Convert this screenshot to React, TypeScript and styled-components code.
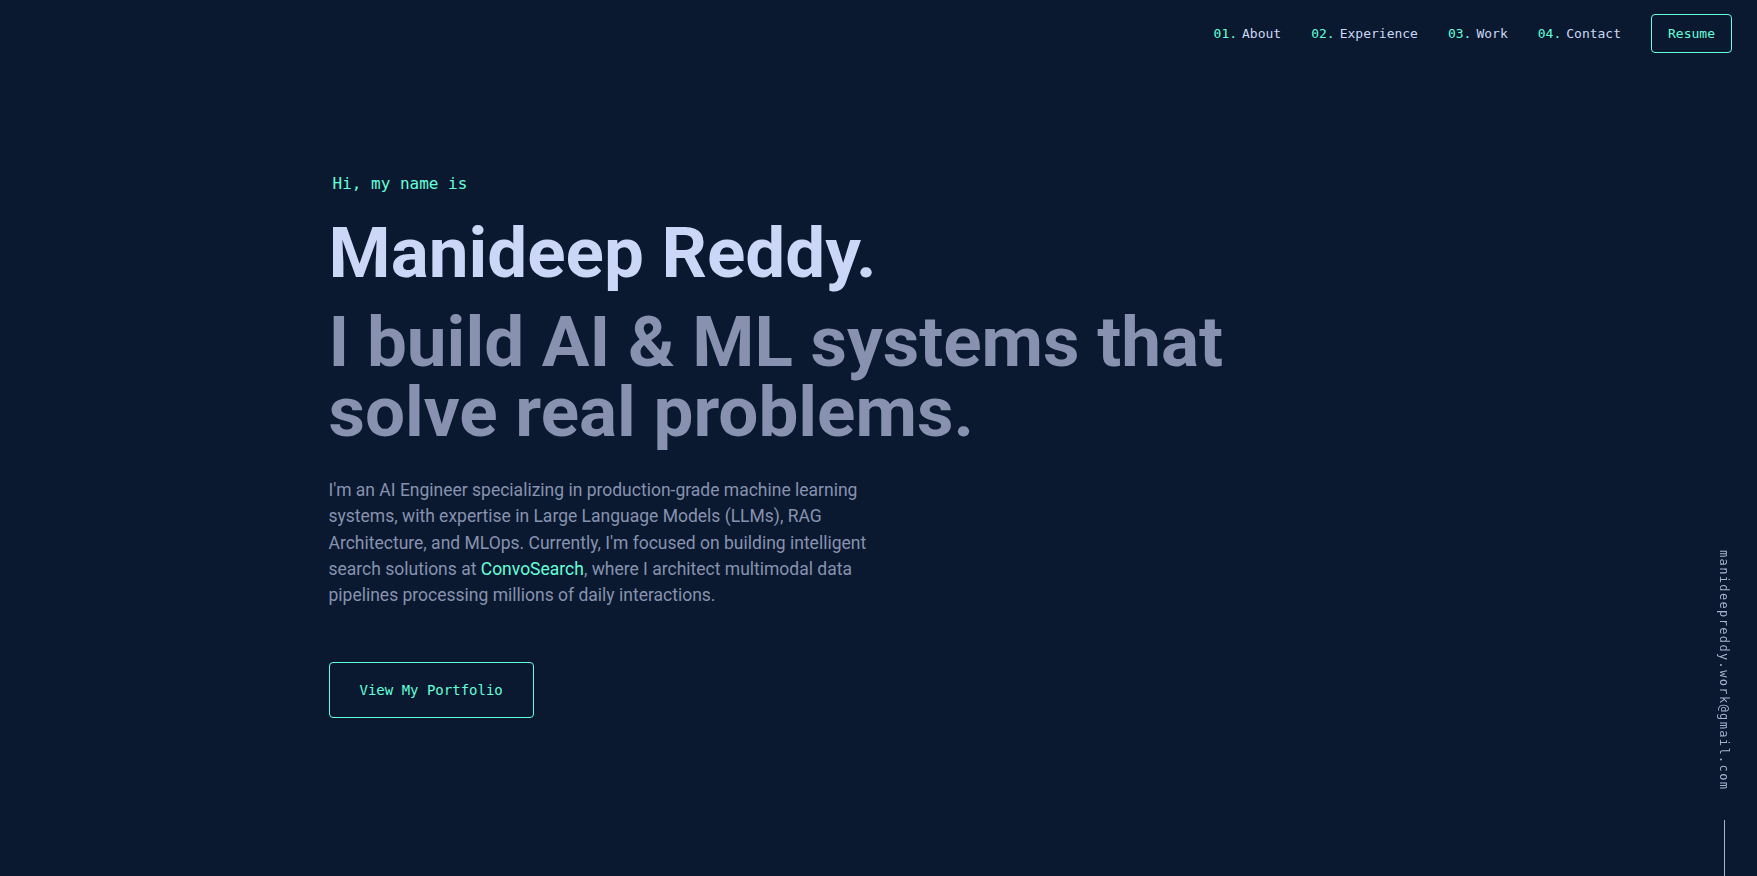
import React from 'react';
import styled, { createGlobalStyle } from 'styled-components';

const GlobalStyle = createGlobalStyle`
	* { box-sizing: border-box; }
	html, body {
		margin: 0;
		padding: 0;
		background: #0a192f;
		color: #8892b0;
		font-family: Roboto, "Liberation Sans", sans-serif;
		overflow: hidden;
	}
`;

const MONO = `"DejaVu Sans Mono", "Liberation Mono", monospace`;

const links = ['About', 'Experience', 'Work', 'Contact'];

const App: React.FC = () => {
	return (
		<Page>
			<GlobalStyle />
			<Header>
				<NavList>
					{links.map((label, i) => (
						<NavItem key={label}>
							<NavLink href={`#${label.toLowerCase()}`}>
								<Num>0{i + 1}.</Num>
								{label}
							</NavLink>
						</NavItem>
					))}
				</NavList>
				<ResumeButton href="#resume">Resume</ResumeButton>
			</Header>
			<Hero>
				<Overline>Hi, my name is</Overline>
				<Name>Manideep Reddy.</Name>
				<Tagline>
					I build AI &amp; ML systems that
					<br />
					solve real problems.
				</Tagline>
				<Intro>
					I'm an AI Engineer specializing in production-grade machine learning
					<br />
					systems, with expertise in Large Language Models (LLMs), RAG
					<br />
					Architecture, and MLOps. Currently, I'm focused on building intelligent
					<br />
					search solutions at <Accent href="#convosearch">ConvoSearch</Accent>, where I architect multimodal data
					<br />
					pipelines processing millions of daily interactions.
				</Intro>
				<BigButton href="#work">View My Portfolio</BigButton>
			</Hero>
			<EmailRail>
				<EmailLink href="mailto:manideepreddy.work@gmail.com">manideepreddy.work@gmail.com</EmailLink>
				<RailLine />
			</EmailRail>
		</Page>
	);
};

export default App;

const Page = styled.div`
	min-height: 100vh;
	background: #0a192f;
`;

const Header = styled.header`
	height: 66px;
	padding: 0 25px;
	display: flex;
	align-items: center;
	justify-content: flex-end;
`;

const NavList = styled.ol`
	display: flex;
	align-items: center;
	margin: 0;
	padding: 0;
	list-style: none;
`;

const NavItem = styled.li`
	margin: 0 5px;
	font-family: ${MONO};
	font-size: 13px;
`;

const NavLink = styled.a`
	display: block;
	padding: 10px;
	color: #ccd6f6;
	text-decoration: none;
`;

const Num = styled.span`
	color: #64ffda;
	margin-right: 5px;
`;

const ResumeButton = styled.a`
	margin-left: 15px;
	padding: 12px 16px;
	border: 1px solid #64ffda;
	border-radius: 4px;
	color: #64ffda;
	font-family: ${MONO};
	font-size: 13px;
	line-height: 1;
	text-decoration: none;
`;

const Hero = styled.section`
	max-width: 1100px;
	margin: 0 auto;
	padding-top: 108px;
	display: flex;
	flex-direction: column;
	align-items: flex-start;
`;

const Overline = styled.h1`
	margin: 0 0 0 4px;
	color: #64ffda;
	font-family: ${MONO};
	font-size: 16px;
	font-weight: 400;
	line-height: 20px;
`;

const Name = styled.h2`
	margin: 20px 0 0;
	color: #ccd6f6;
	font-size: 71px;
	font-weight: 700;
	line-height: 1.1;
`;

const Tagline = styled.h3`
	margin: 15px 0 0;
	color: #8892b0;
	font-size: 71px;
	font-weight: 700;
	line-height: 70px;
`;

const Intro = styled.p`
	margin: 30px 0 0;
	color: #8892b0;
	font-size: 17.5px;
	line-height: 26.3px;
	white-space: nowrap;
`;

const Accent = styled.a`
	color: #64ffda;
	text-decoration: none;
`;

const BigButton = styled.a`
	margin-top: 53px;
	padding: 20px 30px;
	border: 1px solid #64ffda;
	border-radius: 4px;
	color: #64ffda;
	font-family: ${MONO};
	font-size: 14px;
	line-height: 1;
	text-decoration: none;
`;

const EmailRail = styled.div`
	position: fixed;
	right: 13px;
	bottom: 0;
	width: 40px;
	display: flex;
	flex-direction: column;
	align-items: center;
`;

const EmailLink = styled.a`
	margin: 20px auto;
	padding: 10px;
	writing-mode: vertical-rl;
	font-family: ${MONO};
	font-size: 12px;
	letter-spacing: 1.36px;
	line-height: 18px;
	color: #a8b2d1;
	text-decoration: none;
`;

const RailLine = styled.div`
	width: 1px;
	height: 56px;
	background: #a8b2d1;
`;
